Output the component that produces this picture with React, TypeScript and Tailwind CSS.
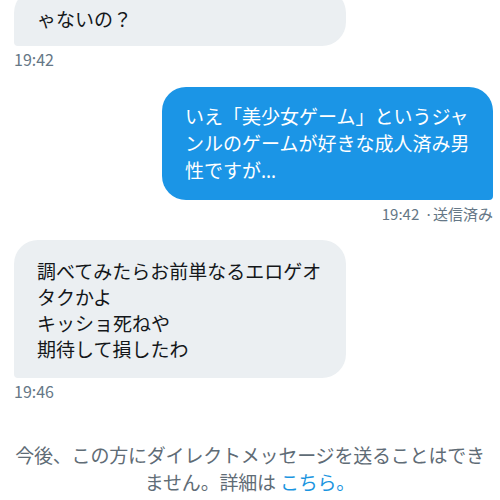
import React from "react";

const font = { fontFamily: '"Noto Sans CJK JP", "Noto Sans", sans-serif' };

export default function App() {
  return (
    <div
      className="w-[500px] h-[500px] overflow-hidden bg-white flex flex-col"
      style={font}
    >
      {/* received bubble (cut off at top) */}
      <div className="pl-[14px] mt-[-11px]">
        <div className="w-[332px] bg-[#ebeff2] rounded-[24px] rounded-bl-[4px] pl-[23px] pr-[20px] pt-[16px] pb-[14px] text-[19px] leading-[27px] text-[#14171a]">
          ゃないの？
        </div>
        <div className="mt-[3px] text-[16px] leading-[20px] text-[#657786]">19:42</div>
      </div>

      {/* sent bubble */}
      <div className="flex flex-col items-end pr-[7px] mt-[18px]">
        <div className="w-[331px] bg-[#1b95e6] rounded-[24px] rounded-br-[4px] pl-[23px] pr-[18px] pt-[15px] pb-[15px] text-[19px] leading-[27px] text-white">
          いえ「美少女ゲーム」というジャンルのゲームが好きな成人済み男性ですが
          <span className="font-['Noto_Sans',sans-serif]">…</span>
        </div>
        <div className="mt-[4px] text-[15px] leading-[20px] text-[#657786]">
          19:42 <span className="ml-[2px]">·送信済み</span>
        </div>
      </div>

      {/* received bubble 2 */}
      <div className="pl-[14px] mt-[16px]">
        <div className="w-[332px] bg-[#ebeff2] rounded-[24px] rounded-bl-[4px] pl-[23px] pr-[18px] pt-[18px] pb-[16px] text-[19px] leading-[26px] text-[#14171a]">
          <div>調べてみたらお前単なるエロゲオタクかよ</div>
          <div>キッショ死ねや</div>
          <div>期待して損したわ</div>
        </div>
        <div className="mt-[3px] text-[16px] leading-[20px] text-[#657786]">19:46</div>
      </div>

      {/* notice */}
      <div className="mt-[40px] text-center text-[19px] leading-[27px] text-[#5f6c76] tracking-[-0.2px]">
        今後、この方にダイレクトメッセージを送ることはでき
        <br />
        ません。詳細は <span className="text-[#1b95e0]">こちら。</span>
      </div>
    </div>
  );
}
